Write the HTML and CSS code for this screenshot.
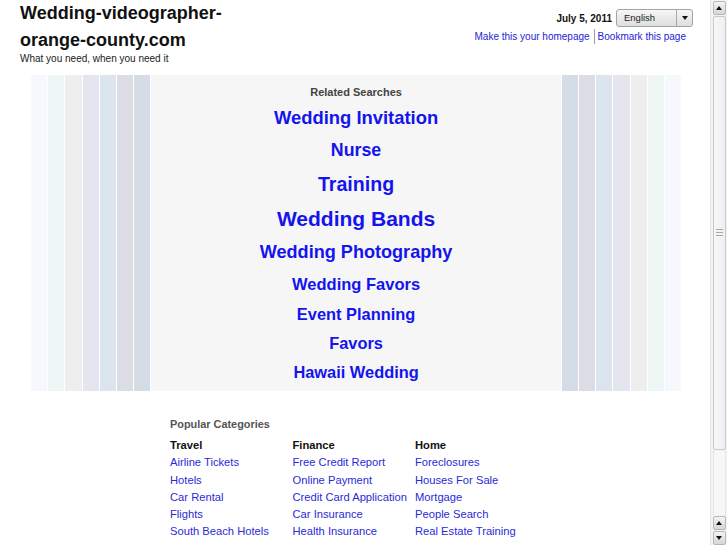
FILE: index.html
```html
<!DOCTYPE html>
<html>
<head>
<meta charset="utf-8">
<title>Wedding-videographer-orange-county.com</title>
<link rel="stylesheet" href="styles.css">
</head>
<body>
<div class="page">
  <header class="top">
    <div class="brand">
      <h1 class="title">Wedding-videographer-<br>orange-county.com</h1>
      <div class="tagline">What you need, when you need it</div>
    </div>
    <div class="tools">
      <div class="tools-row">
        <span class="date">July 5, 2011</span>
        <div class="lang">
          <span class="lang-label">English</span>
          <span class="lang-arrow"><span class="tri-down"></span></span>
        </div>
      </div>
      <div class="tool-links">
        <a href="#">Make this your homepage</a><span class="sep"></span><a href="#">Bookmark this page</a>
      </div>
    </div>
  </header>

  <section class="panel">
    <div class="stripes">
      <div class="stripe c1 outer-l"></div>
      <div class="stripe c2"></div>
      <div class="stripe c3"></div>
      <div class="stripe c4"></div>
      <div class="stripe c5"></div>
      <div class="stripe c6"></div>
      <div class="stripe c7"></div>
    </div>
    <div class="related">
      <div class="related-title">Related Searches</div>
      <a class="rs r1" href="#">Wedding Invitation</a>
      <a class="rs r2" href="#">Nurse</a>
      <a class="rs r3" href="#">Training</a>
      <a class="rs r4" href="#">Wedding Bands</a>
      <a class="rs r5" href="#">Wedding Photography</a>
      <a class="rs r6" href="#">Wedding Favors</a>
      <a class="rs r7" href="#">Event Planning</a>
      <a class="rs r8" href="#">Favors</a>
      <a class="rs r9" href="#">Hawaii Wedding</a>
    </div>
    <div class="stripes">
      <div class="stripe c7"></div>
      <div class="stripe c6"></div>
      <div class="stripe c5"></div>
      <div class="stripe c4"></div>
      <div class="stripe c3"></div>
      <div class="stripe c2"></div>
      <div class="stripe c1 outer-r"></div>
    </div>
  </section>

  <section class="popular">
    <div class="popular-title">Popular Categories</div>
    <div class="cols">
      <div class="col">
        <div class="col-head">Travel</div>
        <a href="#">Airline Tickets</a>
        <a href="#">Hotels</a>
        <a href="#">Car Rental</a>
        <a href="#">Flights</a>
        <a href="#">South Beach Hotels</a>
      </div>
      <div class="col">
        <div class="col-head">Finance</div>
        <a href="#">Free Credit Report</a>
        <a href="#">Online Payment</a>
        <a href="#">Credit Card Application</a>
        <a href="#">Car Insurance</a>
        <a href="#">Health Insurance</a>
      </div>
      <div class="col">
        <div class="col-head">Home</div>
        <a href="#">Foreclosures</a>
        <a href="#">Houses For Sale</a>
        <a href="#">Mortgage</a>
        <a href="#">People Search</a>
        <a href="#">Real Estate Training</a>
      </div>
    </div>
  </section>
</div>

<aside class="scrollbar">
  <div class="sb-btn"><span class="tri-up"></span></div>
  <div class="sb-thumb"><span class="grip"></span></div>
  <div class="sb-track"></div>
  <div class="sb-btn"><span class="tri-up"></span></div>
  <div class="sb-btn"><span class="tri-down"></span></div>
</aside>
</body>
</html>
```

FILE: styles.css
```css
html, body {
  margin: 0;
  padding: 0;
  height: 545px;
  overflow: hidden;
  background: #ffffff;
}

body {
  display: flex;
  font-family: "Liberation Sans", Arial, Helvetica, sans-serif;
  color: #111;
}

a {
  text-decoration: none;
}

.page {
  flex: 0 0 710px;
  width: 710px;
  height: 545px;
  overflow: hidden;
}

/* header */
.top {
  display: flex;
  justify-content: space-between;
  padding: 0 17px 0 20px;
}

.title {
  margin: 0;
  font-size: 18px;
  line-height: 27px;
  font-weight: bold;
  color: #111;
}

.tagline {
  font-size: 10px;
  line-height: 10px;
  color: #222;
}

.tools {
  padding-top: 9px;
  display: flex;
  flex-direction: column;
  align-items: flex-end;
}

.tools-row {
  display: flex;
  align-items: center;
  gap: 4px;
}

.date {
  font-size: 10px;
  font-weight: bold;
  color: #111;
}

.lang {
  display: flex;
  width: 75px;
  height: 16px;
  border: 1px solid #a4a4a4;
  border-radius: 3px;
  background: linear-gradient(#f6f6f6, #dedede);
  box-sizing: content-box;
}

.lang-label {
  flex: 1;
  font-size: 9.5px;
  line-height: 16px;
  padding-left: 7px;
  color: #222;
}

.lang-arrow {
  flex: 0 0 15px;
  border-left: 1px solid #a8a8a8;
  display: flex;
  align-items: center;
  justify-content: center;
}

.tri-down {
  width: 0;
  height: 0;
  border-left: 3.5px solid transparent;
  border-right: 3.5px solid transparent;
  border-top: 4px solid #111;
}

.tri-up {
  width: 0;
  height: 0;
  border-left: 3.5px solid transparent;
  border-right: 3.5px solid transparent;
  border-bottom: 4px solid #111;
}

.tool-links {
  margin-top: 2px;
  padding-right: 7px;
  display: flex;
  align-items: center;
  font-size: 10px;
  line-height: 12px;
}

.tool-links a {
  color: #2424d6;
}

.sep {
  width: 1px;
  height: 15px;
  background: #9a9a9a;
  margin: 0 3px 0 4px;
}

/* stripes panel */
.panel {
  display: flex;
  gap: 1px;
  height: 316px;
  margin: 11px 0 0 31px;
  width: 652px;
}

.stripes {
  display: flex;
  gap: 1px;
}

.stripe {
  width: 16.2px;
  height: 316px;
}

.c1 { background: #f7f8fd; }
.c2 { background: #eff7f6; }
.c3 { background: #eeeeee; }
.c4 { background: #e5e5ef; }
.c5 { background: #dce4ee; }
.c6 { background: #dcdce4; }
.c7 { background: #d4dde6; }

.outer-l { border-radius: 3px 0 0 3px; }
.outer-r { border-radius: 0 3px 3px 0; }

.related {
  flex: 0 0 409.5px;
  background: #f6f6f6;
  text-align: center;
  padding-top: 10px;
  box-sizing: border-box;
}

.related-title {
  font-size: 11px;
  line-height: 14px;
  font-weight: bold;
  color: #444;
  margin-bottom: 3px;
}

.rs {
  display: block;
  font-weight: bold;
  color: #1414ee;
}

.r1 { font-size: 18.4px; line-height: 32px; }
.r2 { font-size: 17.8px; line-height: 33px; }
.r3 { font-size: 19.6px; line-height: 34px; }
.r4 { font-size: 21px; line-height: 35px; }
.r5 { font-size: 18.1px; line-height: 33px; }
.r6 { font-size: 16.5px; line-height: 31px; }
.r7 { font-size: 16.4px; line-height: 29px; }
.r8 { font-size: 16.4px; line-height: 29px; }
.r9 { font-size: 16.4px; line-height: 29px; }

/* popular categories */
.popular {
  margin: 26px 0 0 170px;
}

.popular-title {
  font-size: 10.9px;
  line-height: 14px;
  font-weight: bold;
  color: #555;
  margin-bottom: 6px;
}

.cols {
  display: flex;
}

.col {
  display: flex;
  flex-direction: column;
  width: 122.5px;
  font-size: 11.2px;
  line-height: 17.3px;
}

.col-head {
  font-weight: bold;
  color: #111;
}

.col a {
  color: #2a2ad8;
  white-space: nowrap;
}

/* scrollbar */
.scrollbar {
  flex: 0 0 17px;
  width: 17px;
  height: 545px;
  display: flex;
  flex-direction: column;
  align-items: center;
  background: #f3f3f3;
  border-left: 1px solid #e2e2e2;
  box-sizing: border-box;
  gap: 1px;
}

.sb-btn {
  width: 13px;
  height: 14px;
  border: 1px solid #b8b8b8;
  border-radius: 2px;
  background: linear-gradient(#f4f4f4, #d6d6d6);
  box-sizing: border-box;
  display: flex;
  align-items: center;
  justify-content: center;
  flex: 0 0 14px;
}

.sb-btn:first-child {
  margin-top: 1px;
}

.sb-thumb {
  flex: 0 0 434px;
  width: 13px;
  border: 1px solid #c9c9c9;
  border-radius: 2px;
  background: linear-gradient(90deg, #f6f7f9, #eeeff3);
  box-sizing: border-box;
  display: flex;
  align-items: center;
  justify-content: center;
}

.grip {
  width: 7px;
  height: 9px;
  background: repeating-linear-gradient(#a8a8a8 0 1px, transparent 1px 3px);
}

.sb-track {
  flex: 1;
  width: 13px;
  border-left: 1px dotted #d8d8d8;
  border-right: 1px dotted #d8d8d8;
  box-sizing: border-box;
  background: #f7f7f7;
}
```
